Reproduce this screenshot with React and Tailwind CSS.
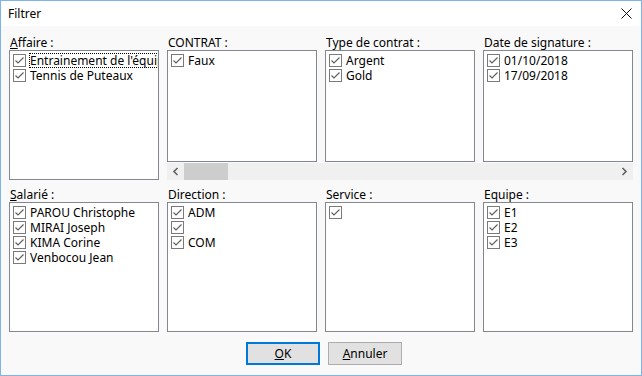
import React from "react";

const Check = () => (
  <svg width="13" height="13" viewBox="0 0 13 13" className="shrink-0">
    <rect x="0.5" y="0.5" width="12" height="12" fill="#fff" stroke="#7a7a7a" />
    <path d="M2.5 6.5 L5 9 L10.5 3.5" fill="none" stroke="#606060" strokeWidth="1.2" />
  </svg>
);

const Item = ({ text, focus }) => (
  <div className="flex items-center h-[15px] leading-[15px] whitespace-nowrap">
    <div className="w-[13px] ml-[3px] mr-[3px] flex items-center">
      <Check />
    </div>
    <span
      className={
        focus
          ? "h-[15px] outline outline-1 outline-dotted outline-black -outline-offset-1 pl-[1px] pr-4"
          : "h-[15px] pl-[1px]"
      }
    >
      {text}
    </span>
  </div>
);

const ListBox = ({ items = [], className = "", focusFirst }) => (
  <div className={"bg-white border border-[#828790] pt-[2px] overflow-hidden " + className}>
    {items.map((t, i) => (
      <Item key={i} text={t} focus={focusFirst && i === 0} />
    ))}
  </div>
);

const Label = ({ children }) => (
  <div className="h-[15px] leading-[15px] pl-[1px] whitespace-nowrap">{children}</div>
);

export default function App() {
  return (
    <div
      className="w-[642px] h-[376px] border border-[#7eb4ea] bg-[#f9f9f9] flex flex-col text-[12px] text-black"
      style={{ fontFamily: '"Segoe UI", "Noto Sans", sans-serif' }}
    >
      <div className="h-[25px] bg-white flex items-center justify-between pl-[7px] pr-[9px]">
        <span className="leading-[15px]">Filtrer</span>
        <svg width="11" height="11" viewBox="0 0 11 11">
          <path d="M0.5 0.5 L10.5 10.5 M10.5 0.5 L0.5 10.5" stroke="#111" strokeWidth="1" />
        </svg>
      </div>

      <div className="flex flex-col px-[8px]">
        <div className="flex gap-[8px] mt-[9px]">
          <div className="w-[150px] flex flex-col">
            <Label>
              <u>A</u>ffaire :
            </Label>
            <ListBox
              className="h-[130px]"
              items={["Entrainement de l'équipe", "Tennis de Puteaux"]}
              focusFirst
            />
          </div>
          <div className="w-[466px] flex flex-col">
            <div className="flex gap-[8px]">
              <div className="w-[150px]">
                <Label>CONTRAT :</Label>
              </div>
              <div className="w-[150px]">
                <Label>Type de contrat :</Label>
              </div>
              <div className="w-[150px]">
                <Label>Date de signature :</Label>
              </div>
            </div>
            <div className="flex gap-[8px]">
              <ListBox className="w-[150px] h-[112px]" items={["Faux"]} />
              <ListBox className="w-[150px] h-[112px]" items={["Argent", "Gold"]} />
              <ListBox className="w-[150px] h-[112px]" items={["01/10/2018", "17/09/2018"]} />
            </div>
            <div className="h-[17px] mt-[1px] bg-[#f0f0f0] flex items-center">
              <div className="w-[17px] flex justify-center">
                <svg width="7" height="9" viewBox="0 0 7 9">
                  <path d="M5.5 1 L2 4.5 L5.5 8" fill="none" stroke="#606060" strokeWidth="1.6" />
                </svg>
              </div>
              <div className="w-[44px] h-[17px] bg-[#cdcdcd]" />
              <div className="flex-1" />
              <div className="w-[17px] flex justify-center">
                <svg width="7" height="9" viewBox="0 0 7 9">
                  <path d="M1.5 1 L5 4.5 L1.5 8" fill="none" stroke="#606060" strokeWidth="1.6" />
                </svg>
              </div>
            </div>
          </div>
        </div>

        <div className="flex gap-[8px] mt-[7px]">
          <div className="w-[150px] flex flex-col">
            <Label>
              <u>S</u>alarié :
            </Label>
            <ListBox
              className="h-[130px]"
              items={["PAROU Christophe", "MIRAI Joseph", "KIMA Corine", "Venbocou Jean"]}
            />
          </div>
          <div className="w-[150px] flex flex-col">
            <Label>Direction :</Label>
            <ListBox className="h-[130px]" items={["ADM", "", "COM"]} />
          </div>
          <div className="w-[150px] flex flex-col">
            <Label>Service :</Label>
            <ListBox className="h-[130px]" items={[""]} />
          </div>
          <div className="w-[150px] flex flex-col">
            <Label>Equipe :</Label>
            <ListBox className="h-[130px]" items={["E1", "E2", "E3"]} />
          </div>
        </div>

        <div className="flex justify-center gap-[8px] mt-[10px] pl-[6px]">
          <button className="w-[74px] h-[23px] bg-[#e1e1e1] border-2 border-[#0078d7] leading-[15px]">
            <u>O</u>K
          </button>
          <button className="w-[74px] h-[23px] bg-[#e1e1e1] border border-[#adadad] leading-[15px]">
            <u>A</u>nnuler
          </button>
        </div>
      </div>
    </div>
  );
}
